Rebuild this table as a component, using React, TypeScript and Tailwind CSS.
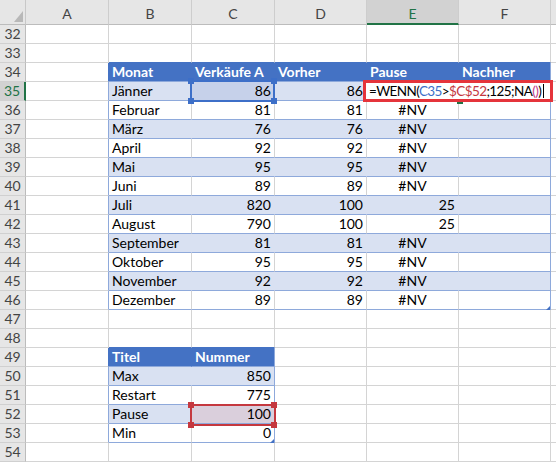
const COLS = ["A", "B", "C", "D", "E", "F"];
const COL_W = ["w-[83px]", "w-[83px]", "w-[83px]", "w-[92px]", "w-[92px]", "w-[92px]"];

const ROWS = Array.from({ length: 23 }, (_, i) => 32 + i);

type Cell = { text: string; align: "l" | "r" | "c" };

const table1: Record<number, string[]> = {
  34: ["Monat", "Verkäufe A", "Vorher", "Pause", "Nachher"],
  35: ["Jänner", "86", "86", "", ""],
  36: ["Februar", "81", "81", "#NV", ""],
  37: ["März", "76", "76", "#NV", ""],
  38: ["April", "92", "92", "#NV", ""],
  39: ["Mai", "95", "95", "#NV", ""],
  40: ["Juni", "89", "89", "#NV", ""],
  41: ["Juli", "820", "100", "25", ""],
  42: ["August", "790", "100", "25", ""],
  43: ["September", "81", "81", "#NV", ""],
  44: ["Oktober", "95", "95", "#NV", ""],
  45: ["November", "92", "92", "#NV", ""],
  46: ["Dezember", "89", "89", "#NV", ""],
};

const table2: Record<number, string[]> = {
  49: ["Titel", "Nummer"],
  50: ["Max", "850"],
  51: ["Restart", "775"],
  52: ["Pause", "100"],
  53: ["Min", "0"],
};

function inT1(r: number, c: number) {
  return r >= 34 && r <= 46 && c >= 1 && c <= 5;
}
function inT2(r: number, c: number) {
  return r >= 49 && r <= 53 && c >= 1 && c <= 2;
}

function cellOf(r: number, c: number): Cell {
  let text = "";
  if (inT1(r, c)) text = table1[r][c - 1];
  if (inT2(r, c)) text = table2[r][c - 1];
  const isHead = r === 34 || r === 49;
  let align: Cell["align"] = "l";
  if (!isHead && c > 1) align = text === "#NV" ? "c" : "r";
  return { text, align };
}

function DataCell({ r, c }: { r: number; c: number }) {
  const t1 = inT1(r, c);
  const t2 = inT2(r, c);
  const inTable = t1 || t2;
  const head = inTable && (r === 34 || r === 49);
  const band = inTable && !head && ((t1 && r % 2 === 1) || (t2 && r % 2 === 0));
  const { text, align } = cellOf(r, c);

  let bg = "bg-white";
  if (head) bg = "bg-[#4472c4]";
  else if (band) bg = "bg-[#d9e1f2]";
  if (r === 35 && c === 2) bg = "bg-[#c6d1ea]";
  if (r === 52 && c === 2) bg = "bg-[#dacfdc]";

  let bottom = "border-b-[#d4d4d4]";
  if (inTable) bottom = "border-b-[#8ea9db]";
  if ((r === 33 && c >= 1 && c <= 5) || (r === 48 && c >= 1 && c <= 2)) bottom = "border-b-[#4472c4]";

  let right = "border-r-[#d4d4d4]";
  if (head) right = "border-r-[#4472c4]";
  else if (band) right = "border-r-[#d9e1f2]";
  if ((t1 && c === 5) || (t2 && c === 2)) right = "border-r-[#8ea9db]";
  if (c === 0 && ((r >= 35 && r <= 46) || (r >= 50 && r <= 53))) right = "border-r-[#8ea9db]";
  if (c === 0 && (r === 34 || r === 49)) right = "border-r-[#4472c4]";

  const alignCls = align === "r" ? "text-right" : align === "c" ? "text-center" : "text-left";

  return (
    <div
      className={`${COL_W[c]} shrink-0 h-[19px] border-r border-b ${bottom} ${right} ${bg} ${alignCls} px-[3px] leading-[18px] whitespace-nowrap overflow-visible ${
        head ? "text-white font-bold" : "text-black"
      }`}
    >
      {text}
    </div>
  );
}

function Handle({ pos, color }: { pos: string; color: string }) {
  return <div className={`absolute w-[6px] h-[6px] ${pos} ${color}`} />;
}

export default function App() {
  return (
    <div className="relative w-[556px] h-[467px] overflow-hidden bg-white font-['Lato','Liberation_Sans',sans-serif] text-[14px]">
      {/* column headers */}
      <div className="flex h-[25px]">
        <div className="relative w-[26px] shrink-0 h-[25px] bg-[#e6e6e6] border-r border-b border-r-[#c8c8c8] border-b-[#bcbcbc]">
          <svg className="absolute left-[14px] top-[11px]" width="9" height="11" viewBox="0 0 9 11">
            <polygon points="9,0 9,11 0,11" fill="#b8b8b8" />
          </svg>
        </div>
        {COLS.map((c, i) => (
          <div
            key={c}
            className={`${COL_W[i]} shrink-0 h-[25px] border-r border-r-[#cdcdcd] text-center pt-[5px] leading-[18px] ${
              c === "E"
                ? "bg-[#d2d2d2] border-b-2 border-b-[#217346] text-[#217346]"
                : "bg-[#e6e6e6] border-b border-b-[#bcbcbc] text-[#444]"
            }`}
          >
            {c}
          </div>
        ))}
        <div className="flex-1 h-[25px] bg-[#e6e6e6] border-b border-b-[#bcbcbc]" />
      </div>

      {/* rows */}
      {ROWS.map((r) => (
        <div key={r} className="flex h-[19px]">
          <div
            className={`w-[26px] shrink-0 h-[19px] border-b border-b-[#d0d0d0] text-center leading-[18px] ${
              r === 35
                ? "bg-[#d2d2d2] border-r-2 border-r-[#217346] text-[#217346]"
                : "bg-[#e6e6e6] border-r border-r-[#bcbcbc] text-[#444]"
            }`}
          >
            {r}
          </div>
          {COLS.map((_, c) => (
            <DataCell key={c} r={r} c={c} />
          ))}
          <div className="flex-1 h-[19px] border-b border-b-[#d4d4d4]" />
        </div>
      ))}

      {/* table resize corners */}
      <svg className="absolute left-[546px] top-[306px]" width="4" height="4" viewBox="0 0 4 4">
        <polygon points="4,0 4,4 0,4" fill="#4472c4" />
      </svg>
      <svg className="absolute left-[270px] top-[439px]" width="4" height="4" viewBox="0 0 4 4">
        <polygon points="4,0 4,4 0,4" fill="#4472c4" />
      </svg>

      {/* C35 reference highlight */}
      <div className="absolute left-[190px] top-[80px] w-[85px] h-[22px] border-2 border-[#3d6fc8]" />
      <Handle pos="left-[188px] top-[78px]" color="bg-[#3d6fc8]" />
      <Handle pos="left-[271px] top-[78px]" color="bg-[#3d6fc8]" />
      <Handle pos="left-[188px] top-[98px]" color="bg-[#3d6fc8]" />
      <Handle pos="left-[271px] top-[98px]" color="bg-[#3d6fc8]" />

      {/* C52 reference highlight */}
      <div className="absolute left-[190px] top-[404px] w-[86px] h-[22px] border-2 border-[#c5383f]" />
      <Handle pos="left-[188px] top-[402px]" color="bg-[#c5383f]" />
      <Handle pos="left-[271px] top-[402px]" color="bg-[#c5383f]" />
      <Handle pos="left-[188px] top-[422px]" color="bg-[#c5383f]" />
      <Handle pos="left-[271px] top-[422px]" color="bg-[#c5383f]" />

      {/* fill handle of active cell */}
      <div className="absolute left-[457px] top-[98px] w-[6px] h-[6px] bg-[#217346]" />

      {/* cell in edit mode, with red annotation box */}
      <div className="absolute left-[363px] top-[80px] w-[190px] h-[22px] border-[3px] border-[#e5343b] bg-white pl-[3px] text-[13.5px] tracking-[-0.6px] leading-[16px] whitespace-nowrap text-black">
        <span>=WENN(</span>
        <span className="text-[#3d6fc8]">C35</span>
        <span>&gt;</span>
        <span className="text-[#c5383f]">$C$52</span>
        <span>;125;NA</span>
        <span className="text-[#c2398a]">()</span>
        <span>)</span>
        <span className="inline-block w-px h-[14px] bg-black ml-[2px] align-[-2px]" />
      </div>
    </div>
  );
}
